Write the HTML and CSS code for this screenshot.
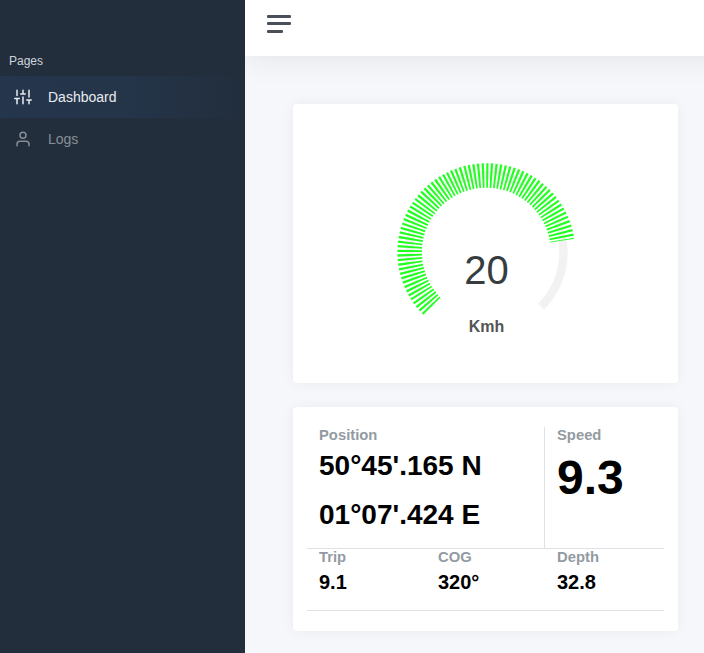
FILE: index.html
```html
<!DOCTYPE html>
<html lang="en">
<head>
<meta charset="utf-8">
<title>Dashboard</title>
<link rel="stylesheet" href="styles.css">
</head>
<body>
<div class="wrapper">
  <nav class="sidebar">
    <div class="sidebar-header">Pages</div>
    <a class="sidebar-link active">
      <svg class="icon" viewBox="0 0 24 24"><path d="M4 21v-7M4 10V3M12 21v-9M12 8V3M20 21v-5M20 12V3M1 14h6M9 8h6M17 16h6"/></svg>
      <span>Dashboard</span>
    </a>
    <a class="sidebar-link">
      <svg class="icon" viewBox="0 0 24 24"><path d="M20 21v-2a4 4 0 0 0-4-4H8a4 4 0 0 0-4 4v2"/><circle cx="12" cy="7" r="4"/></svg>
      <span>Logs</span>
    </a>
  </nav>
  <div class="main">
    <header class="navbar">
      <div class="hamburger"><i></i><i></i><i class="short"></i></div>
    </header>
    <main class="content">
      <section class="card gauge-card">
        <svg class="gauge" viewBox="0 0 385 279">
          <path class="track" d="M139 202.7A77 77 0 1 1 247.9 202.7"/>
          <path class="value" d="M138.9 202.2A76.7 76.7 0 1 1 269.2 136.7"/>
          <text class="number" x="193.5" y="180">20</text>
          <text class="unit" x="193.5" y="228">Kmh</text>
        </svg>
      </section>
      <section class="card data-card">
        <div class="data-row top">
          <div class="cell position">
            <div class="label">Position</div>
            <div class="coord">50°45'.165 N</div>
            <div class="coord">01°07'.424 E</div>
          </div>
          <div class="cell speed">
            <div class="label">Speed</div>
            <div class="big">9.3</div>
          </div>
        </div>
        <div class="data-row bottom">
          <div class="cell"><div class="label">Trip</div><div class="small">9.1</div></div>
          <div class="cell"><div class="label">COG</div><div class="small">320°</div></div>
          <div class="cell"><div class="label">Depth</div><div class="small">32.8</div></div>
        </div>
      </section>
    </main>
  </div>
</div>
</body>
</html>
```
FILE: styles.css
```css
* { box-sizing: border-box; }
body {
  margin: 0;
  background: #f5f7fb;
  font-family: "Liberation Sans", Arial, sans-serif;
  overflow: hidden;
}
.wrapper { display: flex; height: 653px; background: #222e3c; }
.sidebar { width: 245px; flex: none; padding-top: 52px; }
.sidebar-header {
  height: 24px;
  padding-left: 9px;
  font-size: 12px;
  line-height: 18px;
  color: #ced4da;
}
.sidebar-link {
  display: flex;
  align-items: center;
  height: 42px;
  padding-left: 14px;
  font-size: 14px;
  color: rgba(233, 236, 239, .5);
}
.sidebar-link.active {
  color: #e9ecef;
  background: linear-gradient(90deg, rgba(59, 125, 221, .1), rgba(59, 125, 221, .0875) 50%, transparent);
}
.icon {
  width: 18px;
  height: 18px;
  margin-right: 16px;
  fill: none;
  stroke: currentColor;
  stroke-width: 2;
  stroke-linecap: round;
  stroke-linejoin: round;
}
.main { flex: 1; min-width: 0; background: #f5f7fb; overflow: hidden; }
.navbar {
  height: 56px;
  margin-right: -40px;
  padding: 15px 22px;
  background: #fff;
  box-shadow: 0 0 32px rgba(33, 37, 41, .1);
}
.hamburger i {
  display: block;
  width: 24px;
  height: 3px;
  margin-bottom: 4px;
  border-radius: 1px;
  background: #495057;
}
.hamburger i.short { width: 16px; margin-top: 5px; }
.content { padding: 48px 26px 22px 48px; }
.card {
  background: #fff;
  border-radius: 4px;
  box-shadow: 0 0 14px rgba(33, 37, 41, .05);
}
.gauge-card { height: 279px; margin-bottom: 24px; }
.gauge { display: block; width: 385px; height: 279px; }
.track { fill: none; stroke: #f2f2f2; stroke-width: 8.5; }
.value { fill: none; stroke: #20ff20; stroke-width: 24.5; stroke-dasharray: 2; }
.number { font-size: 40px; fill: #373d3f; text-anchor: middle; }
.unit { font-size: 16px; font-weight: 700; fill: #555; text-anchor: middle; }
.data-card { height: 224px; padding: 20px 14px; }
.data-row { display: grid; border-bottom: 1px solid #dee2e6; }
.top { height: 122px; grid-template-columns: 238px 119px; }
.bottom { height: 62px; grid-template-columns: repeat(3, 119px); }
.cell { padding: 0 12px; font-weight: 700; color: #000; white-space: nowrap; }
.position { border-right: 1px solid #dee2e6; }
.label { font-size: 14.8px; line-height: 17px; color: #939ba2; }
.coord { height: 49px; font-size: 28px; line-height: 44px; }
.big { font-size: 48px; line-height: 68px; }
.small { font-size: 20px; line-height: 33px; }
```
